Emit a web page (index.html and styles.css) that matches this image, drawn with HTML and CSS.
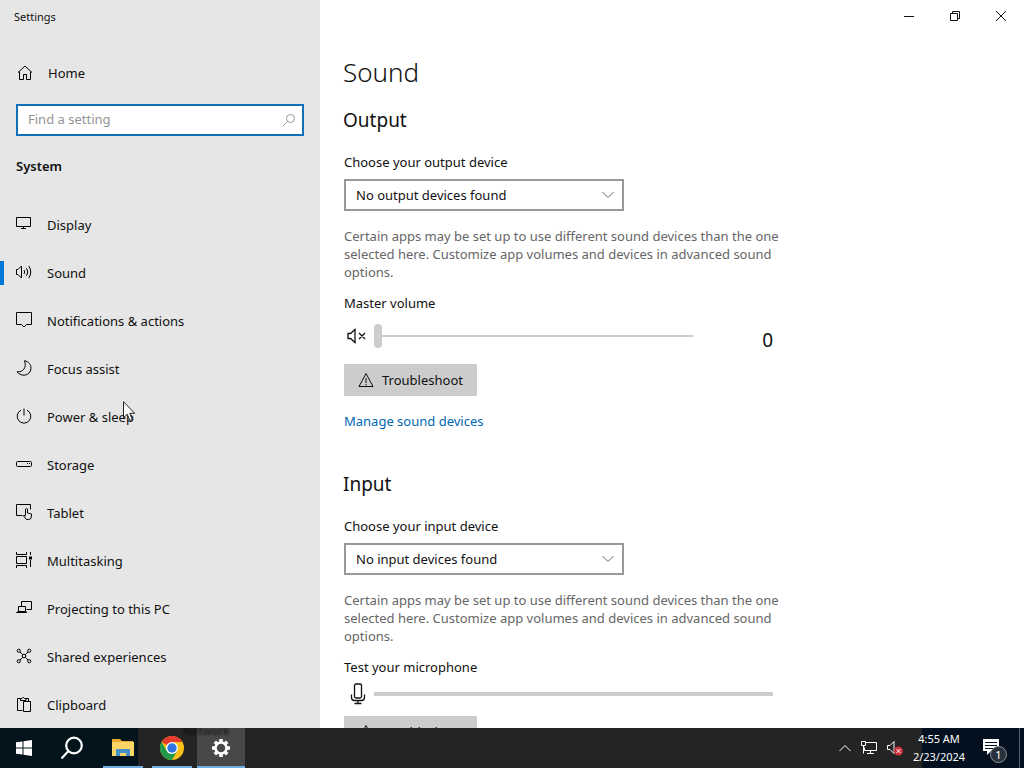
FILE: index.html
```html
<!DOCTYPE html>
<html lang="en">
<head>
    <meta charset="UTF-8">
    <meta name="viewport" content="width=device-width, initial-scale=1.0">
    <title>Settings</title>
    <link rel="stylesheet" href="styles.css">
</head>
<body>

<div class="window">
    <aside class="sidebar">
        <div class="title">Settings</div>

        <a href="#" class="home">
            <svg class="icon" viewBox="0 0 16 16"><path d="M1 7.500L8 1l7 6.500M2.500 6.500v8h4v-5h3v5h4v-8"/></svg>
            Home
        </a>

        <form class="search">
            <input type="text" id="search" aria-label="Find a setting" placeholder="Find a setting">
            <svg class="search-icon" viewBox="0 0 14 14"><circle cx="8.500" cy="5.500" r="4"/><path d="M5.500 8.500L1 13"/></svg>
        </form>

        <h3>System</h3>

        <nav class="menu">
            <a href="#">
                <svg class="icon" viewBox="0 0 16 16"><path d="M.5 1.500h14v9H.5zM7.500 10.500v2M5 12.500h5"/></svg>
                Display
            </a>
            <a href="#" class="active">
                <svg class="icon" viewBox="0 0 16 16"><path d="M.5 5.500H2L5.500 2v12L2 10.500H.5zM8 6q1.300 2 0 4M10.500 4.200q2.600 3.800 0 7.600M12.800 2q4 6 0 12"/></svg>
                Sound
            </a>
            <a href="#">
                <svg class="icon" viewBox="0 0 16 16"><path d="M.5 .5h15v12H10.500L8 15l-2.500-2.500H.5z"/></svg>
                Notifications &amp; actions
            </a>
            <a href="#">
                <svg class="icon" viewBox="0 0 16 16"><path d="M8.500.7C12.500 1.500 15 4.500 15 8.200A7 7 0 0 1 8 15.200C5 15.200 2.500 13.800 1 11.800C7 12.500 11 7.500 8.500.7z"/></svg>
                Focus assist
            </a>
            <a href="#">
                <svg class="icon" viewBox="0 0 16 16"><path d="M8 .5v7M5 2.200a6.800 6.800 0 1 0 6 0"/></svg>
                Power &amp; sleep
            </a>
            <a href="#">
                <svg class="icon" viewBox="0 0 16 16"><rect x=".5" y="5.500" width="15" height="5" rx="1"/><path d="M11 7.500h1M13 7.500h1"/></svg>
                Storage
            </a>
            <a href="#">
                <svg class="icon" viewBox="0 0 16 16"><path d="M6.500 11.500h-6v-11h14v5M9.500 11.500v-6.500q1-1.500 2 0v4l4 1v2q0 3.500-3 3.500h-2L7.500 12q0-1.500 2 0"/></svg>
                Tablet
            </a>
            <a href="#">
                <svg class="icon" viewBox="0 0 16 16"><path d="M.5 0v2.500h10V0M.5 4.500h10v7H.5zM.5 16v-2.500h10V16M14.500 0v3M14.500 8v7"/><path d="M13 4.500h3v3h-3z" fill="#000" stroke="none"/></svg>
                Multitasking
            </a>
            <a href="#">
                <svg class="icon" viewBox="0 0 16 16"><path d="M5.500 6.500v-5h10v8h-5M2.500 6.500h7v5h-7zM2.500 11.500l-2 1h10l-1-2"/></svg>
                Projecting to this PC
            </a>
            <a href="#">
                <svg class="icon" viewBox="0 0 16 16"><circle cx="8" cy="8" r="1.800"/><circle cx="2.800" cy="2.800" r="1.600"/><circle cx="13.200" cy="2.800" r="1.600"/><circle cx="2.800" cy="13.200" r="1.600"/><circle cx="13.200" cy="13.200" r="1.600"/><path d="M4 4l2.800 2.800M12 4L9.200 6.800M4 12l2.800-2.800M12 12L9.200 9.200"/></svg>
                Shared experiences
            </a>
            <a href="#">
                <svg class="icon" viewBox="0 0 16 16"><path d="M6.500 14.500h-5v-12h3M10 2.500h2.500v3M4.500 4.500v-2h1.500q1-2.500 2.500 0H10v2zM7.500 5.500h7v10h-7z"/></svg>
                Clipboard
            </a>
        </nav>
    </aside>

    <main class="content">
        <div class="window-buttons">
            <button type="button" aria-label="Minimize"><svg viewBox="0 0 12 12"><path d="M1 6.500h10"/></svg></button>
            <button type="button" aria-label="Restore"><svg viewBox="0 0 12 12"><path d="M1.500 3.500h7v7h-7zM3.500 3.500v-2h7v7h-2"/></svg></button>
            <button type="button" aria-label="Close"><svg viewBox="0 0 12 12"><path d="M1 1l10 10M11 1L1 11"/></svg></button>
        </div>

        <div class="page">
            <h1>Sound</h1>

            <section>
                <h2>Output</h2>
                <label for="output">Choose your output device</label>
                <div class="select-box">
                    <select id="output"><option>No output devices found</option></select>
                    <svg viewBox="0 0 12 8"><path d="M.5 1L6 6.500 11.500 1"/></svg>
                </div>
                <p>Certain apps may be set up to use different sound devices than the one selected here. Customize app volumes and devices in advanced sound options.</p>
                <label for="volume">Master volume</label>
                <div class="volume-row">
                    <svg class="mute" viewBox="0 0 20 16"><path d="M1 5.500h2.500L8 1.500v13l-4.500-4H1zM12 5l6 6M18 5l-6 6"/></svg>
                    <input type="range" id="volume" min="0" max="100" value="0">
                    <output for="volume">0</output>
                </div>
                <button type="button" class="btn">
                    <svg viewBox="0 0 16 16"><path d="M8 1.500l7 13H1zM8 6v5M8 12v1.300"/></svg>
                    Troubleshoot
                </button>
                <a href="#" class="link">Manage sound devices</a>
            </section>

            <section>
                <h2>Input</h2>
                <label for="input">Choose your input device</label>
                <div class="select-box">
                    <select id="input"><option>No input devices found</option></select>
                    <svg viewBox="0 0 12 8"><path d="M.5 1L6 6.500 11.500 1"/></svg>
                </div>
                <p>Certain apps may be set up to use different sound devices than the one selected here. Customize app volumes and devices in advanced sound options.</p>
                <div class="label">Test your microphone</div>
                <div class="mic-row">
                    <svg class="mic" viewBox="0 0 16 22"><rect x="4.500" y="1" width="7" height="14" rx="1.500"/><path d="M1.500 11.500v3q0 3 3 3h7q3 0 3-3v-3M8 17.500v3M4.500 20.500h7"/></svg>
                    <div class="level"></div>
                </div>
                <button type="button" class="btn">
                    <svg viewBox="0 0 16 16"><path d="M8 1.500l7 13H1zM8 6v5M8 12v1.300"/></svg>
                    Troubleshoot
                </button>
            </section>
        </div>
    </main>
</div>

<footer class="taskbar">
    <button type="button" class="task" aria-label="Start">
        <svg width="16" height="16" viewBox="0 0 16 16"><path fill="#fff" d="M0 2.300l6.500-.9v6.100H0zM7.500 1.200L16 0v7.500H7.500zM0 8.500h6.500v6.100L0 13.700zM7.500 8.500H16V16l-8.500-1.200z"/></svg>
    </button>
    <button type="button" class="task" aria-label="Search">
        <svg width="24" height="24" viewBox="0 0 24 24" fill="none" stroke="#fff" stroke-width="2.200"><circle cx="14" cy="9.500" r="7.800"/><path d="M8.500 15l-7 7.500"/></svg>
    </button>
    <div class="running">
        <button type="button" class="task open" aria-label="File Explorer">
            <svg width="22" height="20" viewBox="0 0 22 20"><path fill="#e8a92e" d="M0 1h8l2 2h11v5H0z"/><path fill="#fbd667" d="M0 4h22v14H0z"/><path fill="#4791c9" d="M4 18v-7h14v7h-4v-3H8v3z"/></svg>
        </button>
        <button type="button" class="task open" aria-label="Chrome">
            <svg width="24" height="24" viewBox="0 0 24 24"><circle cx="12" cy="12" r="12" fill="#fbc116"/><path fill="#e33b2e" d="M12 12L1.600 6A12 12 0 0 1 22.400 6H12z"/><path fill="#229a4c" d="M1.600 6A12 12 0 0 0 12 24l5.200-9L12 12 6.800 15z"/><circle cx="12" cy="12" r="6" fill="#fff"/><circle cx="12" cy="12" r="4.700" fill="#2f76e0"/></svg>
        </button>
        <button type="button" class="task open current" aria-label="Settings">
            <svg width="20" height="20" viewBox="0 0 20 20" fill="none" stroke="#fff"><circle cx="10" cy="10" r="5.500" stroke-width="2.500"/><path stroke-width="3.500" d="M16 10h3M1 10h3M10 1v3M10 16v3M14.200 5.800l2-2M3.800 16.200l2-2M5.800 5.800l-2-2M14.200 14.200l2 2"/></svg>
        </button>
    </div>
    <span class="ghost">Network</span>

    <div class="tray">
        <svg width="14" height="10" viewBox="0 0 14 10"><path d="M1.500 8L7 2.500 12.500 8"/></svg>
        <svg width="18" height="16" viewBox="0 0 18 16"><path d="M5.500 2.500h11v8h-12v-3M10.500 10.500v3M7 13.500h7M1.500 1.500h4v4h-4zM3.500 5.500v8"/></svg>
        <svg width="18" height="16" viewBox="0 0 18 16"><path d="M1.500 5.500H4l4-4v12l-4-4H1.500z"/><circle cx="12.500" cy="11" r="4.500" fill="#c9303c" stroke="none"/><path d="M10.500 9l4 4M14.500 9l-4 4"/></svg>
    </div>
    <div class="clock">
        <div>4:55 AM</div>
        <div>2/23/2024</div>
    </div>
    <button type="button" class="notify" aria-label="Notifications">
        <svg width="18" height="18" viewBox="0 0 18 18"><path fill="#fff" d="M1 1h16v12H9l-4 4v-4H1z"/><path stroke="#061222" d="M3 4.500h12M3 7.500h12M3 10.500h8"/></svg>
        <span class="badge">1</span>
    </button>
</footer>

<svg class="cursor" viewBox="0 0 13 21"><path fill="#fff" stroke="#222" d="M.5.700v16l3.700-3.500 2.600 6.300 2.500-1-2.600-6.200h5z"/></svg>

</body>
</html>
```
FILE: styles.css
```css
* {
    box-sizing: border-box;
}

body {
    margin: 0;
    height: 100vh;
    display: flex;
    flex-direction: column;
    overflow: hidden;
    font-family: "Noto Sans", "Open Sans", sans-serif;
    font-size: 13px;
    line-height: 20px;
    color: #111;
    background: #fff;
}

button,
input,
select {
    font: inherit;
    color: inherit;
}

svg {
    flex: none;
}

.window {
    flex: 1;
    min-height: 0;
    display: flex;
    overflow: hidden;
}

/* left side */
.sidebar {
    width: 320px;
    flex: none;
    background: #e6e6e6;
}

.title {
    height: 32px;
    padding-left: 14px;
    font-size: 11px;
    line-height: 34px;
}

.home {
    display: flex;
    align-items: center;
    gap: 15px;
    height: 48px;
    margin-top: 17px;
    padding-left: 17px;
    color: inherit;
    text-decoration: none;
}

.icon {
    width: 16px;
    height: 16px;
    fill: none;
    stroke: #000;
}

.search {
    position: relative;
    margin: 7px 16px 20px;
}

.search input {
    display: block;
    width: 100%;
    height: 32px;
    padding: 0 36px 2px 10px;
    border: 2px solid #0f72b8;
    background: #fff;
    outline: none;
}

.search input::placeholder {
    color: #949494;
    opacity: 1;
}

.search-icon {
    position: absolute;
    top: 9px;
    right: 8px;
    width: 14px;
    height: 14px;
    fill: none;
    stroke: #999;
}

h3 {
    margin: 0 16px 25px;
    font-size: 13px;
    font-weight: 600;
}

.menu a {
    display: flex;
    align-items: center;
    gap: 15px;
    height: 48px;
    padding-left: 16px;
    color: inherit;
    text-decoration: none;
}

.menu .icon {
    margin-bottom: 2px;
}

.menu .active {
    background: linear-gradient(#0078d7, #0078d7) 0 50% / 4px 24px no-repeat;
}

/* right side */
.content {
    flex: 1;
    min-width: 0;
}

.window-buttons {
    display: flex;
    justify-content: flex-end;
}

.window-buttons button {
    width: 46px;
    height: 32px;
    padding: 0;
    border: none;
    background: none;
}

.window-buttons svg {
    display: block;
    width: 12px;
    height: 12px;
    margin: 0 auto;
    fill: none;
    stroke: #111;
}

.page {
    max-width: 490px;
    padding: 22px 24px 0;
}

h1,
h2 {
    margin-left: -1px;
}

h1 {
    margin-top: 0;
    margin-bottom: 16px;
    font-size: 26px;
    font-weight: 300;
    line-height: 36px;
}

h2 {
    margin-top: 0;
    margin-bottom: 18px;
    font-size: 19px;
    font-weight: 400;
    line-height: 28px;
}

section {
    margin-bottom: 39px;
}

label,
.label {
    display: block;
}

.select-box {
    position: relative;
    width: 280px;
    margin-top: 7px;
}

select {
    display: block;
    width: 100%;
    height: 32px;
    padding: 0 32px 0 10px;
    border: 2px solid #999;
    border-radius: 0;
    background: #fff;
    appearance: none;
}

.select-box svg {
    position: absolute;
    top: 12px;
    right: 10px;
    width: 12px;
    height: 8px;
    fill: none;
    stroke: #666;
    pointer-events: none;
}

p {
    margin: 16px 0 12px;
    line-height: 18px;
    color: #666;
}

.volume-row {
    display: flex;
    align-items: center;
    height: 24px;
    margin: 11px 0 16px;
}

.mute {
    width: 20px;
    height: 16px;
    margin: 0 7px 0 3px;
    fill: none;
    stroke: #111;
    stroke-width: 1.3;
}

input[type="range"] {
    width: 319px;
    height: 24px;
    margin: 0;
    background: none;
    appearance: none;
}

input[type="range"]::-webkit-slider-runnable-track {
    height: 2px;
    background: #ccc;
}

input[type="range"]::-webkit-slider-thumb {
    width: 8px;
    height: 24px;
    margin-top: -11px;
    border-radius: 4px;
    background: #ccc;
    appearance: none;
}

output {
    flex: 1;
    padding: 8px 13px 0 0;
    font-size: 19px;
    text-align: right;
}

.btn {
    display: flex;
    align-items: center;
    gap: 8px;
    height: 32px;
    padding: 0 14px;
    border: none;
    background: #ccc;
}

.btn svg {
    width: 16px;
    height: 16px;
    fill: none;
    stroke: #111;
}

.link {
    display: block;
    margin-top: 15px;
    color: #0067b3;
    text-decoration: none;
}

.mic-row {
    display: flex;
    align-items: center;
    height: 22px;
    margin: 6px 0 11px;
}

.mic {
    width: 16px;
    height: 22px;
    margin: 0 8px 0 6px;
    fill: none;
    stroke: #111;
    stroke-width: 1.3;
}

.level {
    flex: 1;
    height: 4px;
    margin-right: 13px;
    background: #ccc;
}

/* taskbar */
.taskbar {
    position: relative;
    flex: none;
    display: flex;
    align-items: center;
    height: 40px;
    color: #fff;
    background: linear-gradient(90deg, #03141d 138px, #242424 138px, #242424 calc(100% - 102px), #03101f calc(100% - 102px));
}

.task {
    display: flex;
    align-items: center;
    justify-content: center;
    width: 48px;
    height: 40px;
    padding: 0;
    border: none;
    background: none;
}

.running {
    display: flex;
    gap: 1px;
    margin-left: 3px;
}

.open {
    background: linear-gradient(#71aee6, #71aee6) 50% 100% / 40px 2px no-repeat;
}

.current {
    background: linear-gradient(#71aee6, #71aee6) 50% 100% / 100% 2px no-repeat #484848;
}

/* window label showing through the taskbar */
.ghost {
    position: absolute;
    top: -7px;
    left: 183px;
    font-size: 11px;
    font-weight: 600;
    color: #0a0a0a;
    opacity: 0.7;
    filter: blur(1px);
    clip-path: inset(7px 0 0 0);
}

.tray {
    display: flex;
    align-items: center;
    gap: 8px;
    margin-left: auto;
}

.tray svg {
    fill: none;
    stroke: #fff;
}

.clock {
    width: 70px;
    font-size: 11px;
    line-height: 18px;
    text-align: center;
}

.notify {
    position: relative;
    width: 46px;
    height: 40px;
    margin-right: 4px;
    padding: 2px 0 0 8px;
    border: none;
    border-right: 1px solid #56616c;
    background: none;
    text-align: left;
}

.badge {
    position: absolute;
    top: 18px;
    left: 16px;
    width: 17px;
    height: 17px;
    border: 1px solid #8a929a;
    border-radius: 50%;
    background: #29323c;
    color: #fff;
    font-size: 11px;
    line-height: 15px;
    text-align: center;
}

.cursor {
    position: absolute;
    top: 401px;
    left: 123px;
    width: 13px;
    height: 21px;
}
```
